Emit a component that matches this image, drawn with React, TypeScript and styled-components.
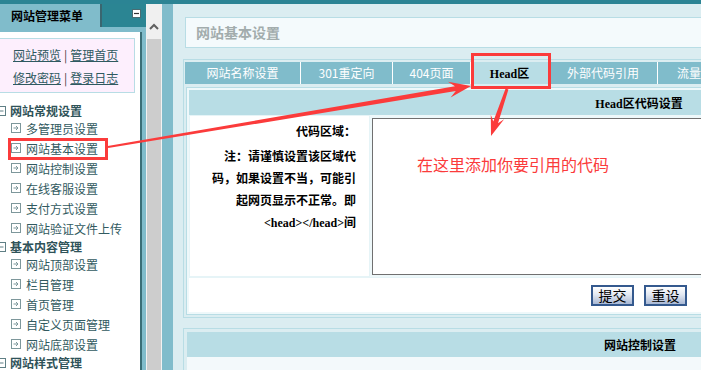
import styled, { createGlobalStyle } from "styled-components";

const GlobalStyle = createGlobalStyle`
  html, body {
    margin: 0;
    padding: 0;
    overflow: hidden;
  }
  body {
    font-family: "Noto Sans CJK SC", "Noto Sans", sans-serif;
    font-size: 12px;
    color: #000;
    background: #dbedf1;
  }
`;

const groups = [
  {
    title: "网站常规设置",
    items: ["多管理员设置", "网站基本设置", "网站控制设置", "在线客服设置", "支付方式设置", "网站验证文件上传"],
  },
  {
    title: "基本内容管理",
    items: ["网站顶部设置", "栏目管理", "首页管理", "自定义页面管理", "网站底部设置"],
  },
  { title: "网站样式管理", items: [] },
];

const tabs = [
  { label: "网站名称设置", width: 115 },
  { label: "301重定向", width: 91 },
  { label: "404页面", width: 77 },
  { label: "Head区", width: 77, active: true },
  { label: "外部代码引用", width: 108 },
  { label: "流量统计代码", width: 110 },
];

// tapered annotation arrow, start -> tip
const arrowPoints = (
  sx: number,
  sy: number,
  tx: number,
  ty: number,
  w0: number,
  w1: number,
  hl: number,
  hw: number
) => {
  const dx = tx - sx;
  const dy = ty - sy;
  const len = Math.hypot(dx, dy);
  const ux = dx / len;
  const uy = dy / len;
  const nx = -uy;
  const ny = ux;
  const bx = tx - ux * hl * 0.72;
  const by = ty - uy * hl * 0.72;
  const hx = tx - ux * hl;
  const hy = ty - uy * hl;
  const pts = [
    [sx + (nx * w0) / 2, sy + (ny * w0) / 2],
    [bx + (nx * w1) / 2, by + (ny * w1) / 2],
    [hx + nx * hw, hy + ny * hw],
    [tx, ty],
    [hx - nx * hw, hy - ny * hw],
    [bx - (nx * w1) / 2, by - (ny * w1) / 2],
    [sx - (nx * w0) / 2, sy - (ny * w0) / 2],
  ];
  return pts.map((p) => p.map((v) => v.toFixed(1)).join(",")).join(" ");
};

const ItemIcon = () => (
  <svg width="10" height="10" viewBox="0 0 10 10">
    <rect x="0.5" y="0.5" width="9" height="9" fill="#fff" stroke="#7d979b" />
    <path d="M2.5 5H7M5 3l2 2-2 2" fill="none" stroke="#7d979b" strokeWidth="1" />
  </svg>
);

const GroupIcon = () => (
  <svg width="10" height="10" viewBox="0 0 10 10">
    <rect x="0.5" y="0.5" width="9" height="9" fill="#fff" stroke="#5f7f85" />
    <path d="M2.5 5h5" stroke="#5f7f85" />
  </svg>
);

const App = () => {
  return (
    <>
      <GlobalStyle />
      <Page>
        <TopBar />
        <Frame>
          <Sidebar>
            <SideHead>
              <SideTab>网站管理菜单</SideTab>
              <SideTool>
                <svg width="9" height="9" viewBox="0 0 9 9">
                  <rect x="0.5" y="0.5" width="8" height="8" fill="#fff" stroke="#4a6c72" />
                  <path d="M2 4.5h5" stroke="#333" strokeWidth="1.2" />
                </svg>
              </SideTool>
            </SideHead>
            <SideBody>
              <QuickBox>
                <QuickLine>
                  <QuickLink href="#">网站预览</QuickLink>
                  <Sep>|</Sep>
                  <QuickLink href="#">管理首页</QuickLink>
                </QuickLine>
                <QuickLine>
                  <QuickLink href="#">修改密码</QuickLink>
                  <Sep>|</Sep>
                  <QuickLink href="#">登录日志</QuickLink>
                </QuickLine>
              </QuickBox>
              <Menu>
                {groups.map((g, gi) => (
                  <div key={g.title}>
                    <GroupTitle $first={gi === 0}>
                      <GroupIcon />
                      {g.title}
                    </GroupTitle>
                    {g.items.map((it) => (
                      <Item key={it}>
                        <ItemIcon />
                        {it}
                      </Item>
                    ))}
                  </div>
                ))}
              </Menu>
            </SideBody>
          </Sidebar>
          <Scrollbar>
            <ScrollUp>
              <svg width="10" height="7" viewBox="0 0 10 7">
                <path d="M1 6l4-4 4 4" fill="none" stroke="#606060" strokeWidth="2" />
              </svg>
            </ScrollUp>
          </Scrollbar>
          <Splitter />
          <Main>
            <TitleBox>网站基本设置</TitleBox>
            <TabPanel>
              <TabRow>
                {tabs.map((t) => (
                  <Tab key={t.label} $width={t.width} $active={t.active}>
                    {t.active ? (
                      <>
                        <Latin>Head</Latin>区
                      </>
                    ) : (
                      t.label
                    )}
                  </Tab>
                ))}
              </TabRow>
              <InnerPanel>
                <HeaderBar>
                  <Latin>Head</Latin>区代码设置
                </HeaderBar>
                <FormRow>
                  <LabelCell>
                    <LabelTitle>代码区域：</LabelTitle>
                    <Note>
                      注：请谨慎设置该区域代
                      <br />
                      码，如果设置不当，可能引
                      <br />
                      起网页显示不正常。即
                      <br />
                      <Latin>&lt;head&gt;&lt;/head&gt;</Latin>间
                    </Note>
                  </LabelCell>
                  <CodeCell>
                    <CodeBox>
                      <Annotation>在这里添加你要引用的代码</Annotation>
                    </CodeBox>
                  </CodeCell>
                </FormRow>
                <ButtonRow>
                  <Button type="button">提交</Button>
                  <Button type="button">重设</Button>
                </ButtonRow>
              </InnerPanel>
            </TabPanel>
            <NextPanel>
              <NextHeader>网站控制设置</NextHeader>
              <NextBody />
            </NextPanel>
          </Main>
        </Frame>
        <Overlay width="701" height="370" viewBox="0 0 701 370">
          <rect x="9.5" y="139.5" width="97" height="19" fill="none" stroke="#fb3b3b" strokeWidth="3" />
          <rect x="472.5" y="54.5" width="77" height="33" fill="none" stroke="#fb3b3b" strokeWidth="3" />
          <polygon points={arrowPoints(108, 147, 471, 86, 2, 5, 22, 8)} fill="#fb3b3b" />
          <polygon points={arrowPoints(507, 89, 491, 136, 3, 5, 20, 7)} fill="#fb3b3b" />
        </Overlay>
      </Page>
    </>
  );
};

export default App;

const Page = styled.div`
  position: relative;
  width: 701px;
  height: 370px;
  display: flex;
  flex-direction: column;
  overflow: hidden;
`;

const TopBar = styled.div`
  height: 4px;
  flex-shrink: 0;
  background: #2b8494;
`;

const Frame = styled.div`
  flex: 1;
  display: flex;
  min-height: 0;
`;

const Sidebar = styled.div`
  width: 146px;
  flex-shrink: 0;
  display: flex;
  flex-direction: column;
  background: #80bccb;
`;

const SideHead = styled.div`
  height: 23px;
  display: flex;
  flex-shrink: 0;
`;

const SideTab = styled.div`
  width: 89px;
  padding-left: 11px;
  border-right: 2px solid #3a6670;
  line-height: 23px;
  font-size: 12px;
  font-weight: bold;
  color: #000;
`;

const SideTool = styled.div`
  flex: 1;
  background: #2b8593;
  display: flex;
  align-items: flex-start;
  justify-content: flex-end;
  padding: 5px 5px 0 0;
`;

const SideBody = styled.div`
  flex: 1;
  margin: 5px 4px 0 0;
  padding-top: 6px;
  background: #fff;
  border-right: 2px solid #3a6e77;
  overflow: hidden;
`;

const QuickBox = styled.div`
  margin: 0 5px 0 -1px;
  padding: 4px 0 3px 13px;
  background: #fdeffd;
  border: 1px solid #b8dde5;
`;

const QuickLine = styled.div`
  line-height: 23px;
  color: #2f5960;
  white-space: nowrap;
`;

const QuickLink = styled.a`
  color: #2f5960;
  text-decoration: underline;
`;

const Sep = styled.span`
  margin: 0 3px;
  color: #444;
`;

const Menu = styled.div`
  margin-top: 11px;
  white-space: nowrap;
`;

const GroupTitle = styled.div<{ $first?: boolean }>`
  height: 14px;
  margin: ${(p) => (p.$first ? "0" : "2px")} 0 0 -4px;
  display: flex;
  align-items: center;
  gap: 4px;
  font-weight: bold;
  color: #2f5359;
  line-height: 14px;
`;

const Item = styled.div`
  height: 20px;
  padding-left: 11px;
  display: flex;
  align-items: center;
  gap: 5px;
  color: #315a60;
`;

const Scrollbar = styled.div`
  width: 16px;
  flex-shrink: 0;
  box-sizing: border-box;
  background: #cdcdcd;
  border-left: 1px solid #f2f2f2;
  border-right: 1px solid #f2f2f2;
`;

const ScrollUp = styled.div`
  height: 35px;
  background: #f0f0f0;
  display: flex;
  justify-content: center;
  align-items: flex-start;
  padding-top: 19px;
  box-sizing: border-box;
`;

const Splitter = styled.div`
  width: 11px;
  flex-shrink: 0;
  background: #80bccb;
`;

const Main = styled.div`
  flex: 1;
  min-width: 0;
  padding: 13px 0 0 10px;
  background: #dbedf1;
  overflow: hidden;
`;

const TitleBox = styled.div`
  width: 1000px;
  height: 29px;
  margin-left: 2px;
  padding-left: 10px;
  border: 1px solid #b8dde5;
  background: #f4fafc;
  line-height: 29px;
  font-size: 14px;
  font-weight: bold;
  color: #a2acac;
`;

const TabPanel = styled.div`
  width: 912px;
  box-sizing: border-box;
  margin-top: 11px;
  padding: 2px 2px 2px 1px;
  border: 1px solid #b8dde5;
`;

const TabRow = styled.div`
  height: 22px;
  display: flex;
  background: #80bccb;
  white-space: nowrap;
  overflow: hidden;
`;

const Tab = styled.div<{ $width: number; $active?: boolean }>`
  width: ${(p) => p.$width}px;
  flex-shrink: 0;
  border-right: 1px solid #fff;
  text-align: center;
  line-height: 22px;
  font-size: 12px;
  color: ${(p) => (p.$active ? "#000" : "#fff")};
  font-weight: ${(p) => (p.$active ? "bold" : "normal")};
  background: ${(p) => (p.$active ? "#b8dde5" : "transparent")};
`;

const Latin = styled.span`
  font-family: "Liberation Serif", "Times New Roman", serif;
  font-weight: bold;
`;

const InnerPanel = styled.div`
  margin: 3px 0 0 1px;
  padding: 2px;
  border: 1px solid #b8dde5;
  background: #eef8fa;
`;

const HeaderBar = styled.div`
  height: 25px;
  line-height: 25px;
  text-align: center;
  background: #b8dde5;
  font-weight: bold;
  font-size: 12px;
`;

const FormRow = styled.div`
  display: flex;
  height: 162px;
  background: #eef8fa;
`;

const LabelCell = styled.div`
  width: 181px;
  flex-shrink: 0;
  box-sizing: border-box;
  padding: 5px 13px 0 0;
  border: 1px solid #e6f4f7;
  background: #fff;
  text-align: right;
  font-weight: bold;
`;

const LabelTitle = styled.div`
  line-height: 20px;
  margin-bottom: 4px;
`;

const Note = styled.div`
  line-height: 22px;
  white-space: nowrap;
`;

const CodeCell = styled.div`
  flex: 1;
  padding: 3px 0 2px 2px;
`;

const CodeBox = styled.div`
  position: relative;
  height: 157px;
  box-sizing: border-box;
  border: 1px solid #707070;
  background: #fff;
`;

const Annotation = styled.div`
  position: absolute;
  left: 44px;
  top: 35px;
  font-size: 16px;
  line-height: 20px;
  color: #fb3b3b;
  white-space: nowrap;
`;

const ButtonRow = styled.div`
  height: 35px;
  display: flex;
  justify-content: center;
  align-items: center;
  gap: 10px;
  background: #fff;
  border-top: 1px solid #e6f4f7;
  box-sizing: border-box;
`;

const Button = styled.button`
  width: 43px;
  height: 21px;
  padding: 0;
  border: 2px solid #34598e;
  background: linear-gradient(180deg, #ffffff 0%, #e2e8f2 45%, #a9b8d4 100%);
  font-family: "Noto Sans CJK SC", sans-serif;
  font-size: 14px;
  line-height: 17px;
  color: #000;
`;

const NextPanel = styled.div`
  width: 913px;
  box-sizing: border-box;
  margin-top: 10px;
  padding: 3px 2px 0 3px;
  border: 1px solid #b8dde5;
`;

const NextHeader = styled.div`
  height: 25px;
  line-height: 25px;
  text-align: center;
  background: #b8dde5;
  font-weight: bold;
  font-size: 12px;
`;

const NextBody = styled.div`
  height: 30px;
  background: #f3f9fb;
`;

const Overlay = styled.svg`
  position: absolute;
  left: 0;
  top: 0;
  pointer-events: none;
`;
